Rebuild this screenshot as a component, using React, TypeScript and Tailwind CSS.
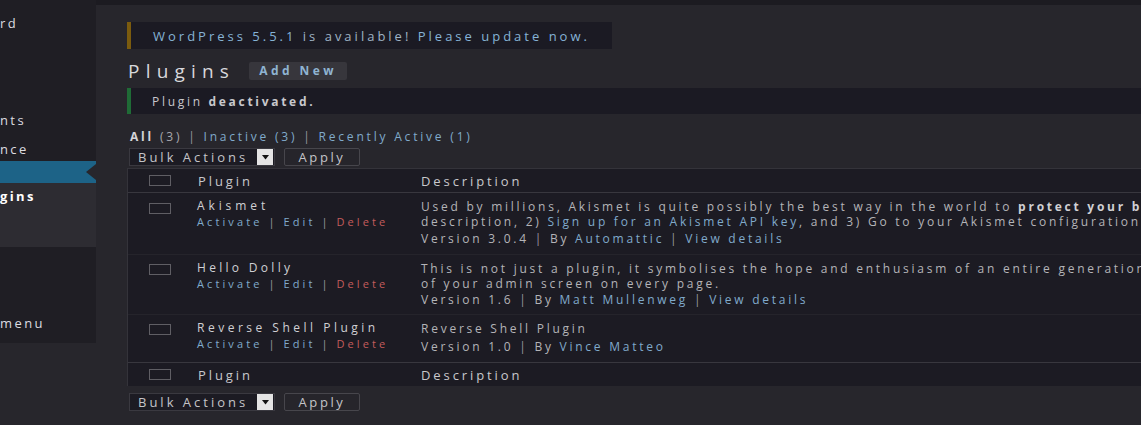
import React from "react";

const link = "text-[#80aacb]";
const sep = "text-[#9a9aa0]";

function Checkbox() {
  return <div className="w-[22px] h-[11px] border border-[#5f5e64] bg-[#1c1b23]" />;
}

function BulkRow() {
  return (
    <div className="flex items-center h-[18px] pl-[2px]">
      <div className="flex items-stretch w-[146px] h-[18px] border border-[#3a3940] bg-[#1c1b23]">
        <span className="flex-1 pl-[8px] text-[13px] leading-[16px] tracking-[3px] text-[#c4c4c8]">Bulk Actions</span>
        <span className="w-[16px] mr-[1px] bg-[#e4e4e4] flex items-center justify-center">
          <svg width="7" height="5" viewBox="0 0 7 5"><polygon points="0,0 7,0 3.5,4.5" fill="#111" /></svg>
        </span>
      </div>
      <button className="ml-[9px] w-[76px] h-[18px] border border-[#47464c] rounded-[2px] bg-[#26252b] text-[13px] leading-[16px] tracking-[2.6px] text-[#c4c4c8]">
        Apply
      </button>
    </div>
  );
}

function Actions() {
  return (
    <div className="text-[11px] leading-[16px] tracking-[3.1px] whitespace-nowrap">
      <span className={link}>Activate</span>
      <span className={sep}> | </span>
      <span className={link}>Edit</span>
      <span className={sep}> | </span>
      <span className="text-[#c35c5c]">Delete</span>
    </div>
  );
}

function PluginCell({ name, tracking }: { name: string; tracking: string }) {
  return (
    <div className="w-[223px] shrink-0 pl-[14px] pt-[5px]">
      <div className={"text-[12px] leading-[16px] text-[#d0d0d4] " + tracking}>{name}</div>
      <Actions />
    </div>
  );
}

function HeaderRow({ top }: { top: boolean }) {
  return (
    <div
      className={
        "flex h-[24px] items-center text-[13px] tracking-[2.9px] text-[#c8c8cc] " +
        (top ? "border-b border-[#38373e]" : "border-t border-[#38373e]")
      }
    >
      <div className="w-[55px] shrink-0 pl-[21px] flex items-center">
        <Checkbox />
      </div>
      <div className="w-[223px] shrink-0 pl-[15px] leading-[16px]">Plugin</div>
      <div className="flex-1 min-w-0 pl-[15px] leading-[16px]">Description</div>
    </div>
  );
}

export default function App() {
  return (
    <div className="w-[1141px] h-[425px] overflow-hidden flex bg-[#27262c] font-['Open_Sans',sans-serif] text-[#c8c8cc]">
      <aside className="relative w-[96px] shrink-0 self-start h-[343px] bg-[#1f1e24] flex flex-col text-[13px] leading-[18px] tracking-[2.4px] text-[#dcdce0]">
        <div className="mt-[14px] h-[18px]">rd</div>
        <div className="mt-[79px] h-[18px]">nts</div>
        <div className="mt-[11px] h-[18px]">nce</div>
        <div className="relative mt-[3px] h-[22px] bg-[#1d6387]">
          <span className="absolute right-0 top-[3px] w-0 h-0 border-y-[8px] border-y-transparent border-r-[10px] border-r-[#27262c]" />
        </div>
        <div className="h-[64px] bg-[#2d2c32] pt-[4px]">
          <div className="h-[18px] font-bold text-white">gins</div>
        </div>
        <div className="mt-[67px] h-[18px]">menu</div>
      </aside>

      <main className="flex-1 min-w-0 border-t-[5px] border-[#1c1b21] pl-[31px]">
        <div className="mt-[17px] w-[485px] h-[27px] flex items-center bg-[#1b1a23] border-l-[4px] border-[#7b5b0e] pl-[22px]">
          <p className="text-[13px] leading-[16px] tracking-[3px] whitespace-nowrap">
            <span className="text-[#86b3d6]">WordPress 5.5.1</span>
            <span className="text-[#9fb3c4]"> is available! </span>
            <span className="text-[#86b3d6]">Please update now.</span>
          </p>
        </div>

        <div className="mt-[9px] h-[26px] flex items-center">
          <h1 className="pl-[1px] text-[19px] leading-[26px] tracking-[6.2px] text-[#d8d8dc]">Plugins</h1>
          <span className="ml-[14px] h-[18px] w-[98px] flex items-center justify-center bg-[#37363c] rounded-[2px] text-[12px] font-bold tracking-[3.4px] text-[#8fb4d2]">
            Add New
          </span>
        </div>

        <div className="mt-[4px] w-[1300px] h-[26px] flex items-center bg-[#1b1a23] border-l-[4px] border-[#1f6b36] pl-[21px]">
          <p className="text-[12px] leading-[15px] tracking-[2.7px] text-[#c8c8cc]">
            Plugin <b className="font-bold">deactivated.</b>
          </p>
        </div>

        <div className="mt-[15px] h-[16px] pl-[3px] text-[12px] leading-[16px] tracking-[2.8px] whitespace-nowrap">
          <span className="font-bold text-[#d4d4d8]">All</span>
          <span className="text-[#a8a8ac]"> (3)</span>
          <span className={sep}> | </span>
          <span className={link}>Inactive (3)</span>
          <span className={sep}> | </span>
          <span className={link}>Recently Active (1)</span>
        </div>

        <div className="mt-[3px]">
          <BulkRow />
        </div>

        <div className="mt-[2px] w-[1300px] bg-[#1c1b23] border-t border-l border-[#34333a]">
          <HeaderRow top />

          <div className="flex h-[62px] border-b border-[#25242b]">
            <div className="w-[55px] shrink-0 pl-[21px] pt-[10px]">
              <Checkbox />
            </div>
            <PluginCell name="Akismet" tracking="tracking-[3.9px]" />
            <div className="flex-1 min-w-0 overflow-hidden pl-[15px] pt-[6px] text-[12px] leading-[15px] tracking-[2.75px] text-[#b4b4b8] whitespace-nowrap">
              <p>
                Used by millions, Akismet is quite possibly the best way in the world to{" "}
                <b className="font-bold text-[#d0d0d4]">protect your blog</b>
              </p>
              <p>
                description, 2) <span className={link}>Sign up for an Akismet API key</span>, and 3) Go to your Akismet configuration
              </p>
              <p className="mt-[2px]">
                Version 3.0.4 <span className={sep}>|</span> By <span className={link}>Automattic</span>{" "}
                <span className={sep}>|</span> <span className={link}>View details</span>
              </p>
            </div>
          </div>

          <div className="flex h-[60px] border-b border-[#25242b]">
            <div className="w-[55px] shrink-0 pl-[21px] pt-[9px]">
              <Checkbox />
            </div>
            <PluginCell name="Hello Dolly" tracking="tracking-[3.3px]" />
            <div className="flex-1 min-w-0 overflow-hidden pl-[15px] pt-[6px] text-[12px] leading-[15px] tracking-[2.75px] text-[#b4b4b8] whitespace-nowrap">
              <p>This is not just a plugin, it symbolises the hope and enthusiasm of an entire generation</p>
              <p>of your admin screen on every page.</p>
              <p className="mt-[1px]">
                Version 1.6 <span className={sep}>|</span> By <span className={link}>Matt Mullenweg</span>{" "}
                <span className={sep}>|</span> <span className={link}>View details</span>
              </p>
            </div>
          </div>

          <div className="flex h-[47px]">
            <div className="w-[55px] shrink-0 pl-[21px] pt-[9px]">
              <Checkbox />
            </div>
            <PluginCell name="Reverse Shell Plugin" tracking="tracking-[3.5px]" />
            <div className="flex-1 min-w-0 overflow-hidden pl-[15px] pt-[6px] text-[12px] leading-[15px] tracking-[2.75px] text-[#b4b4b8] whitespace-nowrap">
              <p>Reverse Shell Plugin</p>
              <p className="mt-[3px]">
                Version 1.0 <span className={sep}>|</span> By <span className={link}>Vince Matteo</span>
              </p>
            </div>
          </div>

          <HeaderRow top={false} />
        </div>

        <div className="mt-[7px]">
          <BulkRow />
        </div>
      </main>
    </div>
  );
}
